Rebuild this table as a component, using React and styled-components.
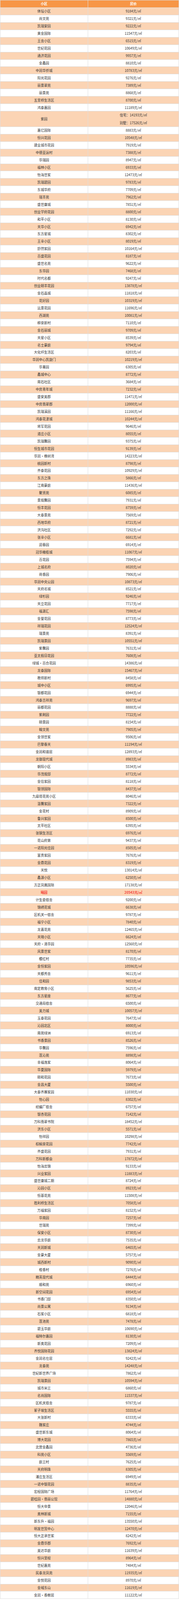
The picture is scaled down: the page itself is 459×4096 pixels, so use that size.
import React from "react";
import styled, { createGlobalStyle } from "styled-components";

const GlobalStyle = createGlobalStyle`
  html, body {
    margin: 0;
    padding: 0;
    background: #ffffff;
  }
  body {
    font-family: "Noto Sans CJK SC", "Noto Sans", sans-serif;
  }
`;

// 房价列表，每行 "小区|单价"
const raw = `体坛小区|9184
尚文苑|9321
凯瑞安园|9222
黄金国际|11547
王舍小区|6515
世纪花园|10649
通济花园|9957
金鑫园|8810
中润华侨城|10783
阳光花园|9276
丽景翠苑|7389
丽景苑|8868
五里桥生活区|8700
鸿泰嘉园|11189
紫园|住宅：14193;别墅：17526
嘉亿国际|8883
恒兴花园|10548
建业城市花园|7919
中德亚运村|7388
华瑞园|8947
福林小区|6933
怡海世家|12473
凯瑞碧园|9783
东城华府|7709
瑞丰苑|7962
盛世康城|7851
创业学府花园|8800
和平小区|8130
天华小区|6942
东方星城|8302
王辛小区|8019
舒然家园|10164
百盛花园|8187
盛世名苑|9622
东华园|7468
时代名都|9247
创业颐丰花园|13878
金石晶城|11818
花好园|10319
远景花园|11696
西湖苑|10081
柳泉新村|7110
金石丽城|9709
天星小区|8539
名士豪庭|9794
大化纤生活区|8203
华润中心凯旋门|10219
华菁园|6305
鑫城中心|8772
南石社区|3684
中房青年城|7232
盛安美郡|11471
中房翡翠郡|12000
凯瑞溪园|11166
鸿泰花漾城|10244
将军花园|9646
道庄小区|8055
凯瑞馨园|9375
恒生城市花园|9139
华润·橡树湾|14223
桃园新村|8798
齐泰花园|10929
东方之珠|5866
江南豪庭|11436
聚贤苑|6085
景观馨园|7931
恒丰花园|8759
大泰景苑|7569
西地华府|8721
洪沟社区|7292
张辛小区|6681
迎春园|6914
冠华橄榄城|11067
百花园|7594
上城名府|8020
荷香园|7906
华润中央公园|10873
天府名城|8521
绿杉园|9246
天立花园|7717
福源汇|7598
金誉花园|8773
祥瑞花园|12524
瑞景苑|8391
凯瑞景园|10551
紫馨园|7631
亚太假日花园|7608
绿城·百合花园|14386
龙泰国际|15467
教师新村|8458
城中小区|6995
银都花园|6944
鸿泰吉祥苑|9697
丽都花园|8888
紫荆园|7722
颐景园|8154
翰文苑|7905
金领世家|9506
巴黎春天|11194
金润和谐居|12893
龙御现代城|8983
朝阳小区|5534
华茂观邸|8772
金信家园|8118
银领国际|8437
九级塔花苑小区|8046
温馨家园|7322
金花村|8909
鲁兴家园|8500
太平社区|6395
张钢生活区|6976
花山府第|9437
一诺阳光佳园|8505
富贵家园|7676
金鼎花园|8319
天悦|13014
鑫源小区|6250
方正凤凰国际|17138
曦园|20543|hot
计生委宿舍|9200
锦绣花城|6638
区机关一宿舍|9787
福宁小区|7840
龙喜花苑|12465
天晓小区|6624
天府·清华园|12560
风景世家|8170
樱红村|7735
金恒家园|10596
天都秀舍|9611
佳和园|9853
南定教育小区|5625
东方星座|8677
交通局宿舍|6500
美力城|10057
玉泰花园|7647
沁园北区|8000
南苑绿洲|6913
书香景园|8526
华馨园|7596
莲沁苑|8898
幸福逸家|8064
华夏国际|5979
颐和花园|7673
金昌大厦|5500
大泰齐赛家园|11030
怡心园|8302
经编厂宿舍|6757
银杏花园|7142
万科翡翠书院|18452
洪东小区|5571
怡祥园|10298
棕榈泉花园|7742
齐盛花园|7931
万科新都会|17872
怡海云锦|9133
兴业家园|11883
盛世康城二期|8724
沁园小区|8923
恒基花苑|11508
胜利桥生活区|7058
万福家园|8152
华南园|7257
世瑞苑|7399
保安小区|8730
云龙华庭|7535
天润新城|6465
金豪大厦|5757
城西新村|9090
橙香村|7276
精英现代城|6444
顺和苑|6960
新空间花园|6954
书香门邸|8350
尚景公寓|9134
石家小区|6818
莲池苑|7478
碧玉华庭|10690
福特尔嘉园|8130
新奥花园|7209
齐悦国际花园|13824
金润名仕居|9242
龙泰苑|14248
世纪新世界广场|7862
凯瑞景园|10594
城市米兰|6860
名尚国际|11537
区机关宿舍|9787
冢子坡生活区|5555
大张新村|6333
魏家庄|4744
盛世新东城|8064
博大花园|7865
北营金鑫园|4736
科苑小区|5569
庭兰村|7625
天府明珠|8305
潘庄生活区|6949
一诺中银花园|8835
宏程国际广场|11764
碧桂园·翡丽公馆|14880
恒大帝景|12046
奥林新城|7155
新东升·福园|13550
明发世贸中心|12470
恒大正承世家|8242
金鼎华郡|7692
美达华庭|11639
恒兴里程|8964
世纪嘉苑|7484
民泰龙凤苑|11935
金悦花园|8970
金域东山|11619
金润·香榭居|11122`;

const rows = raw.split("\n").map((line) => {
  const [name, price, flag] = line.split("|");
  return { name, prices: price.split(";"), hot: flag === "hot" };
});

const Table = styled.div`
  width: 459px;
  box-sizing: border-box;
  border-top: 1px solid #dedede;
  border-left: 1px solid #dedede;
  border-right: 1px solid #dedede;
`;

const Row = styled.div`
  display: grid;
  grid-template-columns: 224px 1fr;
  box-sizing: border-box;
  min-height: ${(p) => (p.$tall ? "39.8px" : "18.94px")};
  border-bottom: 1px solid #dedede;
  background: ${(p) => (p.$head ? "#f79646" : p.$shade ? "#fbd4b4" : "#ffffff")};
`;

const Cell = styled.div`
  display: flex;
  flex-direction: column;
  align-items: center;
  justify-content: center;
  gap: ${(p) => (p.$tall ? "9px" : "2px")};
  font-size: 8.6px;
  line-height: 11px;
  white-space: nowrap;
  color: ${(p) => (p.$head ? "#ffffff" : p.$hot ? "#f5423a" : "#333333")};
  font-weight: ${(p) => (p.$head || p.$hot ? 700 : 400)};
  & + & {
    border-left: 1px solid #dedede;
  }
`;

const Line = styled.span`
  display: block;
`;

const App = () => {
  return (
    <>
      <GlobalStyle />
      <Table>
        <Row $head>
          <Cell $head>小区</Cell>
          <Cell $head>房价</Cell>
        </Row>
        {rows.map((row, index) => {
          const tall = row.prices.length > 1;
          return (
            <Row key={index} $shade={index % 2 === 0} $tall={tall}>
              <Cell $hot={row.hot}>{row.name}</Cell>
              <Cell $hot={row.hot} $tall={tall}>
                {row.prices.map((p, i) => (
                  <Line key={i}>{`${p}元/㎡`}</Line>
                ))}
              </Cell>
            </Row>
          );
        })}
      </Table>
    </>
  );
};

export default App;
